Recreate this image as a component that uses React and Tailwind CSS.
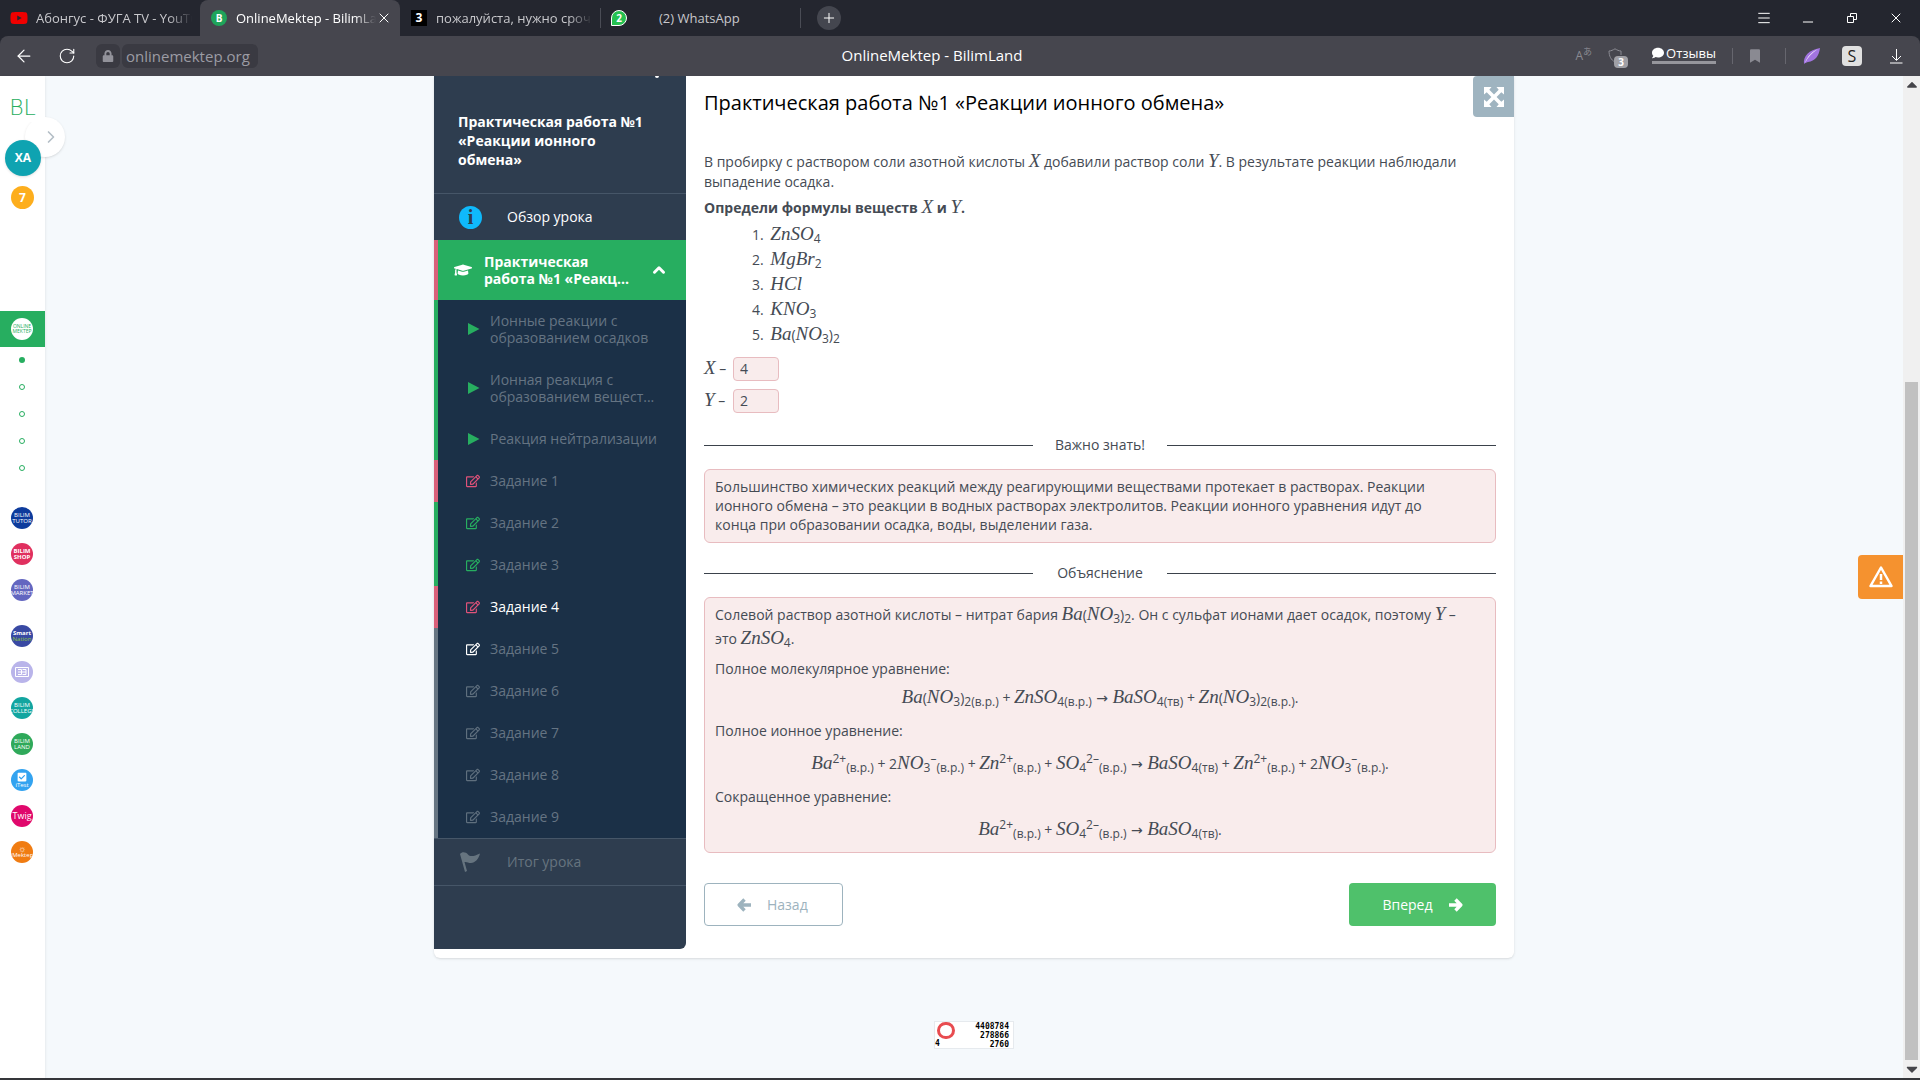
import React from 'react';
import { Menu, Minus, X, Plus, ArrowLeft, RotateCw, ChevronRight, ChevronUp } from 'lucide-react';
import {
  FaYoutube, FaLock, FaComment, FaBookmark, FaGraduationCap,
  FaRegEdit, FaCheckSquare, FaCaretUp, FaCaretDown,
} from 'react-icons/fa';

const lessonItems = [
  { title: 'Ионные реакции с образованием осадков', kind: 'video', status: 'done' },
  { title: 'Ионная реакция с образованием вещест...', kind: 'video', status: 'done' },
  { title: 'Реакция нейтрализации', kind: 'video', status: 'done' },
  { title: 'Задание 1', kind: 'task', status: 'failed' },
  { title: 'Задание 2', kind: 'task', status: 'done' },
  { title: 'Задание 3', kind: 'task', status: 'done' },
  { title: 'Задание 4', kind: 'task', status: 'failed', current: true },
  { title: 'Задание 5', kind: 'task', status: 'open' },
  { title: 'Задание 6', kind: 'task', status: 'locked' },
  { title: 'Задание 7', kind: 'task', status: 'locked' },
  { title: 'Задание 8', kind: 'task', status: 'locked' },
  { title: 'Задание 9', kind: 'task', status: 'locked' },
];

const stripe = {
  done: 'border-[#27ae60]',
  failed: 'border-[#d9607a]',
  open: 'border-[#667582]',
  locked: 'border-[#667582]',
};

const iconColor = {
  done: 'text-[#27ae60]',
  failed: 'text-[#e0527a]',
  open: 'text-white',
  locked: 'text-[#5f6f7e]',
};

const products = [
  { name: ['BILIM', 'TUTOR'], bg: 'bg-[#0d3b9c]' },
  { name: ['BILIM', 'SHOP'], bg: 'bg-[#e0305f]', bold: true },
  { name: ['BILIM', 'MARKET'], bg: 'bg-[#6366c0]' },
];

const M = ({ children }) => (
  <i className="font-['Liberation_Serif',serif] text-[19px] leading-none font-normal">{children}</i>
);

const Aq = () => <>(в.р.)</>;
const BaNO3 = () => <><M>Ba</M>(<M>NO</M><sub>3</sub>)<sub>2</sub></>;
const ZnSO4 = () => <><M>ZnSO</M><sub>4</sub></>;
const BaIon = () => <><M>Ba</M><sup>2+</sup><sub><Aq /></sub></>;
const ZnIon = () => <><M>Zn</M><sup>2+</sup><sub><Aq /></sub></>;
const NitrateIon = () => <>2<M>NO</M><sub>3</sub><sup>–</sup><sub><Aq /></sub></>;
const SulfateIon = () => <><M>SO</M><sub>4</sub><sup>2–</sup><sub><Aq /></sub></>;
const BaSO4 = () => <><M>BaSO</M><sub>4(тв)</sub></>;
const Yields = () => <span className="font-['DejaVu_Sans',sans-serif] leading-none"> → </span>;

const BoldArrow = ({ className }) => (
  <svg className={`h-3.5 w-3.5 ${className}`} viewBox="0 0 14 14" fill="none" stroke="currentColor" strokeWidth="3.400" strokeLinejoin="round">
    <path d="M7.500 1.500 2.200 7l5.300 5.500M2.500 7H14" />
  </svg>
);

const Divider = () => <span className="h-4 w-px bg-[#66666e]" />;

const Tab = ({ icon, title, active }) => (
  <div
    className={`flex h-9 w-[200px] shrink-0 items-center pl-2.5 pr-2 ${
      active ? 'rounded-t-lg bg-[#46464e] text-white' : 'text-[#c8c8cc]'
    }`}
  >
    <span className="mr-2 flex w-[18px] shrink-0 justify-center">{icon}</span>
    <span className="min-w-0 flex-1 overflow-hidden whitespace-nowrap [mask-image:linear-gradient(to_right,black_85%,transparent)]">
      {title}
    </span>
    {active && (
      <button aria-label="Закрыть вкладку"><X className="h-4 w-4" strokeWidth={1.5} /></button>
    )}
  </div>
);

const Browser = () => (
  <header className="shrink-0 bg-[#24262f] text-[13px]">
    <div className="flex h-9 items-center">
      <Tab
        title="Абонгус - ФУГА TV - YouTube"
        icon={<FaYoutube className="h-[18px] w-[18px] text-[#f00000]" />}
      />
      <Tab
        active
        title="OnlineMektep - BilimLand"
        icon={<span className="flex h-4 w-4 items-center justify-center rounded-full bg-[#1fa45b] text-[10px] font-bold">B</span>}
      />
      <Tab
        title="пожалуйста, нужно срочно"
        icon={<span className="h-4 w-4 bg-black text-center text-xs leading-4 font-bold text-white">3</span>}
      />
      <span className="h-5 w-px bg-[#4a4c55]" />
      <div className="flex w-[199px] items-center gap-8 pl-2.5 text-[#c8c8cc]">
        <span className="flex h-4 w-4 items-center justify-center rounded-full rounded-bl-none border border-white bg-[#25c151] text-[10px] font-bold text-white">2</span>
        (2) WhatsApp
      </div>
      <span className="h-5 w-px bg-[#4a4c55]" />
      <button aria-label="Новая вкладка" className="ml-4 flex h-6 w-6 items-center justify-center rounded-full bg-[#44464f] text-white">
        <Plus className="h-4 w-4" strokeWidth={1.5} />
      </button>
      <div className="ml-auto flex items-center gap-7 pr-4 text-white">
        <button aria-label="Меню"><Menu className="h-4 w-4" strokeWidth={1.5} /></button>
        <button aria-label="Свернуть"><Minus className="mt-2 h-4 w-4" strokeWidth={1.5} /></button>
        <button aria-label="Развернуть">
          <svg className="h-4 w-4" viewBox="0 0 16 16" fill="none" stroke="currentColor">
            <path d="M3.5 6.5h6v6h-6zM6.5 6V3.5h6v6H10" />
          </svg>
        </button>
        <button aria-label="Закрыть"><X className="h-4 w-4" strokeWidth={1.5} /></button>
      </div>
    </div>

    <div className="flex h-10 items-center rounded-t-lg bg-[#46464e]">
      <div className="flex flex-1 items-center">
        <button aria-label="Назад" className="ml-3.5 text-white"><ArrowLeft className="h-5 w-5" strokeWidth={1.5} /></button>
        <button aria-label="Обновить" className="ml-6 text-white"><RotateCw className="h-[18px] w-[18px]" strokeWidth={1.5} /></button>
        <span className="ml-5 flex h-6 w-6 items-center justify-center rounded-md bg-[#3a3a42] text-[#92929a]">
          <FaLock className="h-3 w-3" />
        </span>
        <span className="ml-0.5 rounded-md bg-[#3a3a42] px-1 pr-2 text-[15px] leading-6 text-[#9c9ca4]">onlinemektep.org</span>
      </div>
      <div className="mr-10 text-[15px] text-white">OnlineMektep - BilimLand</div>
      <div className="flex flex-1 items-center justify-end gap-4 pr-4 text-[#8a8a92]">
        <span className="flex items-center text-xs">A<span className="mb-2 font-['Noto_Sans_CJK_JP',sans-serif] text-[9px]">あ</span></span>
        <span className="relative">
          <svg className="h-4 w-5" viewBox="0 0 20 16" fill="none" stroke="currentColor">
            <path d="M1 3C3 3 5 2 7 .8 9 2 11 3 13 3v4M1 3c0 5 2 9 6 11" />
          </svg>
          <span className="absolute left-1.5 top-2 h-3 w-3.5 rounded-sm bg-[#a0a0a6] text-center text-[10px] leading-3 font-bold text-white">3</span>
        </span>
        <span className="-mx-1"><Divider /></span>
        <span className="mb-1 flex items-center gap-0.5 border-b-[3px] border-[#96969c] text-[13px] leading-4 text-white">
          <FaComment className="h-3 w-3" />Отзывы
        </span>
        <Divider />
        <FaBookmark className="mx-px h-3.5 w-2.5" />
        <span className="ml-2 flex"><Divider /></span>
        <svg className="h-5 w-5" viewBox="0 0 20 20">
          <path d="M2 18C1 10 7 4 18 2c-1 8-5 13-12 14-1 0-3 1-4 2Z" fill="#a274e0" />
          <path d="M3 17C6 11 10 7 16 3 11 5 5 10 3 17Z" fill="#f0e4fc" />
        </svg>
        <span className="ml-1 h-5 w-5 rounded bg-[#e0e0e0] text-center text-base leading-5 text-[#222]">S</span>
        <button aria-label="Загрузки" className="ml-2.5 text-white">
          <svg className="h-4 w-4" viewBox="0 0 16 16" fill="none" stroke="currentColor">
            <path d="M8.500 1v11M4 8l4.500 4.500L13 8M2 15h12.500" />
          </svg>
        </button>
      </div>
    </div>
  </header>
);

const Badge = ({ bg, children }) => (
  <a
    href="#"
    className={`flex h-[22px] w-[22px] flex-col items-center justify-center overflow-hidden rounded-full text-[6px] leading-[6px] text-white ${bg}`}
  >
    {children}
  </a>
);

const Rail = () => (
  <nav className="relative z-10 flex w-[45px] shrink-0 flex-col bg-white pt-[18px] shadow-sm">
    <button
      aria-label="Раскрыть меню"
      className="absolute left-[25px] top-[41px] -z-10 flex h-10 w-10 items-center justify-end rounded-full bg-white pr-1 text-[#b4bec6] shadow"
    >
      <ChevronRight className="h-5 w-5" />
    </button>
    <a href="#" className="bg-white text-center font-['DejaVu_Sans',sans-serif] text-[22px] leading-7 font-extralight text-[#27ae60]">BL</a>
    <span className="z-10 mt-[18px] ml-[5px] flex h-9 w-9 items-center justify-center rounded-full bg-[#0fa3b1] text-xs font-bold text-white shadow">ХА</span>
    <span className="mt-2.5 ml-[11px] flex h-[23px] w-[23px] items-center justify-center rounded-full bg-[#fdae1d] text-xs font-bold text-white">7</span>
    <div className="mt-[102px] flex h-9 w-full items-center bg-[#27ae60] pl-[11px]">
      <span className="flex h-[22px] w-[22px] flex-col items-center justify-center rounded-full bg-white text-[5px] leading-[5px] text-[#27ae60]">
        <span>ONLINE</span><span>MEKTEP</span>
      </span>
    </div>
    <div className="mt-2.5 ml-[19px] flex flex-col gap-[21px]">
      <span className="h-1.5 w-1.5 rounded-full bg-[#27ae60]" />
      <span className="h-1.5 w-1.5 rounded-full border border-[#27ae60]" />
      <span className="h-1.5 w-1.5 rounded-full border border-[#27ae60]" />
      <span className="h-1.5 w-1.5 rounded-full border border-[#27ae60]" />
      <span className="h-1.5 w-1.5 rounded-full border border-[#27ae60]" />
    </div>
    <div className="mt-[36px] ml-[11px] flex flex-col gap-3.5">
      {products.map(({ name, bg, bold }) => (
        <Badge key={name[1]} bg={bg}>
          <span className={bold ? 'font-bold' : ''}>{name[0]}</span>
          <span className={bold ? 'font-bold' : ''}>{name[1]}</span>
        </Badge>
      ))}
    </div>
    <div className="mt-6 ml-[11px] flex flex-col gap-3.5">
      <Badge bg="bg-[#3949a3]">
        <span className="font-bold">Smart</span><span className="text-[#8ec63f]">Nation</span>
      </Badge>
      <Badge bg="bg-[#b9b4ea]">
        <svg className="h-2.5 w-3.5" viewBox="0 0 14 10" fill="none" stroke="white">
          <path d="M.5.5h13v9H.5zM3 2.500h3.500v5H3M7.500 2.500H11v5H7.500M3 5h8" />
        </svg>
      </Badge>
      <Badge bg="bg-[#12a5a0]"><span>BILIM</span><span>COLLEGE</span></Badge>
      <Badge bg="bg-[#2fa95a]"><span>BILIM</span><span>LAND</span></Badge>
      <Badge bg="bg-[#33a3f0]"><FaCheckSquare className="h-2.5 w-2.5" /><span>iTest</span></Badge>
      <Badge bg="bg-[#e0086c]"><span className="text-[9px] leading-3">Twig</span></Badge>
      <Badge bg="bg-[#f07c12]"><span className="text-[9px]">☼</span><span>iMektep</span></Badge>
    </div>
  </nav>
);

const LessonItem = ({ item }) => (
  <li className={`border-l-4 ${stripe[item.status]}`}>
    <a href="#" className="flex items-center gap-2.5 pt-3 pr-3 pb-[13px] pl-7 leading-[17px]">
      <span className={`flex w-[14px] shrink-0 ${iconColor[item.status]}`}>
        {item.kind === 'video' ? (
          <svg className="ml-0.5 h-3 w-3" viewBox="0 0 12 12" fill="currentColor"><path d="M0 0l11.500 6L0 12z" /></svg>
        ) : (
          <FaRegEdit className="h-3.5 w-3.5" />
        )}
      </span>
      <span className={item.current ? 'text-white' : 'text-[#657483]'}>{item.title}</span>
    </a>
  </li>
);

const Sidebar = () => (
  <aside className="flex w-[252px] shrink-0 flex-col rounded-br-md bg-[#2e3d4f]">
    <span className="mr-[27px] h-0.5 w-1 self-end rounded-b-full bg-white" />
    <h2 className="border-b border-[#465668] pt-[34px] pr-9 pb-6 pl-6 leading-[19px] font-bold text-white">
      Практическая работа №1 «Реакции ионного обмена»
    </h2>
    <a href="#" className="flex h-[46px] items-center gap-[25px] pl-[25px] text-white">
      <span className="flex h-[23px] w-[23px] items-center justify-center rounded-full bg-[#0fb9fb] font-['Liberation_Serif',serif] text-xl font-bold text-[#2e3d4f]">i</span>
      Обзор урока
    </a>
    <button className="flex h-[60px] items-center border-l-4 border-[#d9607a] bg-[#27ae60] pl-4 text-left leading-[17px] font-bold text-white">
      <FaGraduationCap className="mr-3 h-[18px] w-[18px] shrink-0" />
      <span className="w-[154px]">Практическая работа №1 «Реакц...</span>
      <ChevronUp className="ml-3 h-[18px] w-[18px]" strokeWidth={4} />
    </button>
    <ul className="bg-[#1b3047]">
      {lessonItems.map((item) => <LessonItem key={item.title} item={item} />)}
    </ul>
    <a href="#" className="flex h-12 items-center gap-[27px] border-y border-[#465668] pl-[26px] text-[#66747f]">
      <svg className="h-5 w-5" viewBox="0 0 20 20" fill="currentColor">
        <path d="M0 2C2-.5 6 0 8 2.500c2 2.500 6 2 12-1-1 5-5 9.500-9 9.500-3 0-4-1.500-6.500-1l2.500 9-2 1Z" />
      </svg>
      Итог урока
    </a>
  </aside>
);

const Separator = ({ children }) => (
  <div className="flex items-center">
    <span className="h-px flex-1 bg-[#3b424b]" />
    <span className="w-[134px] text-center leading-5">{children}</span>
    <span className="h-px flex-1 bg-[#3b424b]" />
  </div>
);

const Answer = ({ id, symbol, value }) => (
  <div className="flex h-[25px] items-center">
    <label htmlFor={id} className="w-[29px]"><M>{symbol}</M> –</label>
    <input
      id={id}
      defaultValue={value}
      className="h-6 w-[46px] rounded-sm border border-[#e8bcc0] bg-[#f9ecec] px-1.5"
    />
  </div>
);

const Option = ({ children }) => <li><span className="ml-[3px]">{children}</span></li>;

const Task = () => (
  <main className="min-w-0 flex-1 px-[18px] pt-2.5 pb-8 text-[#454b54] [&_sub]:text-[12px] [&_sup]:text-[12px]">
    <h1 className="text-xl leading-[34px] text-black">Практическая работа №1 «Реакции ионного обмена»</h1>
    <p className="mt-[31px] leading-5">
      В пробирку с раствором соли азотной кислоты <M>X</M> добавили раствор соли <M>Y</M>. В результате реакции
      наблюдали выпадение осадка.
    </p>
    <p className="mt-[5px] leading-5 font-bold">Определи формулы веществ <M>X</M> и <M>Y</M>.</p>
    <ol className="mt-1 ml-12 list-inside list-decimal leading-[25px]">
      <Option><ZnSO4 /></Option>
      <Option><M>MgBr</M><sub>2</sub></Option>
      <Option><M>HCl</M></Option>
      <Option><M>KNO</M><sub>3</sub></Option>
      <Option><BaNO3 /></Option>
    </ol>
    <div className="mt-[9px] flex flex-col gap-[7px]">
      <Answer id="answer-x" symbol="X" value="4" />
      <Answer id="answer-y" symbol="Y" value="2" />
    </div>

    <div className="mt-[22px]"><Separator>Важно знать!</Separator></div>
    <div className="mt-3.5 rounded-md border border-[#e8bcc0] bg-[#f9ecec] pt-[7px] pr-10 pb-2 pl-2.5 leading-[19px]">
      Большинство химических реакций между реагирующими веществами протекает в растворах. Реакции ионного обмена –
      это реакции в водных растворах электролитов. Реакции ионного уравнения идут до конца при образовании осадка,
      воды, выделении газа.
    </div>

    <div className="mt-5"><Separator>Объяснение</Separator></div>
    <div className="mt-3.5 rounded-md border border-[#e8bcc0] bg-[#f9ecec] px-2.5 pt-[5px] pb-[7px]">
      <p className="pr-4 leading-6">
        Солевой раствор азотной кислоты – нитрат бария <BaNO3 />. Он с сульфат ионами дает осадок, поэтому <M>Y</M> –
        это <ZnSO4 />.
      </p>
      <p className="mt-2 leading-5">Полное молекулярное уравнение:</p>
      <p className="mt-1 text-center leading-[30px]">
        <BaNO3 /><sub><Aq /></sub> + <ZnSO4 /><sub><Aq /></sub><Yields /><BaSO4 /> + <M>Zn</M>(<M>NO</M><sub>3</sub>)<sub>2<Aq /></sub>.
      </p>
      <p className="mt-2 leading-5">Полное ионное уравнение:</p>
      <p className="mt-2 text-center leading-[30px]">
        <BaIon /> + <NitrateIon /> + <ZnIon /> + <SulfateIon /><Yields /><BaSO4 /> + <ZnIon /> + <NitrateIon />.
      </p>
      <p className="mt-2 leading-5">Сокращенное уравнение:</p>
      <p className="mt-2 text-center leading-[30px]"><BaIon /> + <SulfateIon /><Yields /><BaSO4 />.</p>
    </div>

    <div className="mt-[30px] flex justify-between">
      <button className="flex h-[43px] w-[139px] items-center gap-4 rounded-sm border border-[#9db3be] pl-8 text-[#9db3be]">
        <BoldArrow className="rotate-0" />Назад
      </button>
      <button className="flex h-[43px] w-[147px] items-center justify-center gap-4 rounded-sm bg-[#4fc16b] text-white">
        Вперед<BoldArrow className="rotate-180" />
      </button>
    </div>
  </main>
);

export default function App() {
  return (
    <div className="flex h-screen flex-col overflow-hidden border-b-2 border-[#35363a] bg-[#f5f9fc] font-['Open_Sans',sans-serif] text-sm">
      <Browser />
      <div className="relative flex min-h-0 flex-1">
        <Rail />
        <div className="flex min-w-0 flex-1 flex-col items-center overflow-hidden">
          <section className="relative flex w-full max-w-[1080px] rounded-b-md bg-white shadow-sm">
            <div className="mb-[9px] flex"><Sidebar /></div>
            <Task />
            <button aria-label="На весь экран" className="absolute top-0 right-0 flex h-[41px] w-[41px] items-center justify-center rounded-l-sm bg-[#9fb4c0] text-white">
              <svg className="h-5 w-5" viewBox="0 0 20 20" fill="currentColor">
                <path d="M0 0h7.500L5.300 2.700 10 7.400l4.700-4.700L12.500 0H20v7.500l-2.700-2.200L12.600 10l4.700 4.700 2.700-2.200V20h-7.500l2.200-2.700-4.700-4.700-4.700 4.700L7.500 20H0v-7.500l2.700 2.200L7.400 10 2.700 5.300 0 7.500Z" />
              </svg>
            </button>
          </section>
          <div className="mt-[63px] flex h-7 w-20 justify-between border border-[#e6eaee] bg-white pr-1 font-['DejaVu_Sans_Mono',monospace] text-[8px] leading-[9px] font-bold text-black">
            <div className="flex flex-col">
              <span className="ml-0.5 h-[18px] w-[18px] rounded-full border-[3px] border-[#e84c50]" />
              <span>4</span>
            </div>
            <div className="text-right"><div>4408784</div><div>278866</div><div>2760</div></div>
          </div>
        </div>
        <button aria-label="Сообщить об ошибке" className="absolute top-[479px] right-[17px] flex h-11 w-[45px] items-center justify-center rounded-l-sm bg-[#f5922f] text-white">
          <svg className="h-6 w-6" viewBox="0 0 24 24" fill="none" stroke="currentColor" strokeWidth="2.500" strokeLinejoin="round">
            <path d="M12 2.500 22.500 21h-21ZM12 9v6M12 16.500v2.500" />
          </svg>
        </button>
        <div className="flex w-[17px] shrink-0 flex-col items-center bg-[#f0f0f0] text-[#45454a]">
          <FaCaretUp className="h-[17px] w-3 shrink-0" />
          <span className="mt-auto h-[678px] w-[13px] bg-[#c1c1c1]" />
          <FaCaretDown className="h-[18px] w-3 shrink-0" />
        </div>
      </div>
    </div>
  );
}
